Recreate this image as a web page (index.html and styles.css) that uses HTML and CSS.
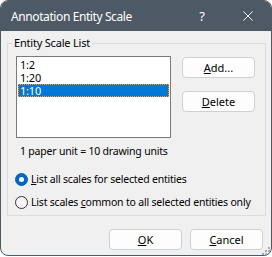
FILE: index.html
```html
<html>
  <head>
    <link rel="stylesheet" href="styles.css">
  </head>
  <body>
    <div class="window">
      <div class="titlebar">
        <span class="title">Annotation Entity Scale</span>
        <span class="caption-btn help">?</span>
        <span class="caption-btn">
          <svg width="10" height="10" viewBox="0 0 10 10"><path d="M0.5 0.5 L9.5 9.5 M9.5 0.5 L0.5 9.5" stroke="#fff" stroke-width="1" fill="none"/></svg>
        </span>
      </div>
      <div class="body">
        <fieldset class="group">
          <legend>Entity Scale List</legend>
          <div class="group-body">
            <div class="list-row">
              <div class="listbox">
                <div class="item">1:2</div>
                <div class="item">1:20</div>
                <div class="item selected">1:10</div>
              </div>
              <div class="side">
                <button class="btn"><u>A</u>dd...</button>
                <button class="btn"><u>D</u>elete</button>
              </div>
            </div>
            <div class="info">1 paper unit = 10 drawing units</div>
            <label class="radio first"><span class="dot checked"></span><span><u>L</u>ist all scales for selected entities</span></label>
            <label class="radio"><span class="dot"></span><span>List scales <u>c</u>ommon to all selected entities only</span></label>
          </div>
        </fieldset>
        <div class="footer">
          <button class="btn"><u>O</u>K</button>
          <button class="btn"><u>C</u>ancel</button>
        </div>
      </div>
      <svg class="grip" width="9" height="9" viewBox="0 0 9 9">
        <rect x="7" y="1" width="2" height="2" fill="#a8a8a8"/>
        <rect x="4" y="4" width="2" height="2" fill="#a8a8a8"/>
        <rect x="7" y="4" width="2" height="2" fill="#a8a8a8"/>
        <rect x="1" y="7" width="2" height="2" fill="#a8a8a8"/>
        <rect x="4" y="7" width="2" height="2" fill="#a8a8a8"/>
        <rect x="7" y="7" width="2" height="2" fill="#a8a8a8"/>
      </svg>
    </div>
  </body>
</html>
```

FILE: styles.css
```css
body { margin:0; background:#fff; font-family:"Noto Sans", sans-serif; font-size:10.5px; letter-spacing:-0.2px; color:#000; }
.window { position:relative; width:270px; height:254px; border:1px solid #4e5966; border-radius:8px; background:#f0f0f0; overflow:hidden; }
.titlebar { display:flex; align-items:center; height:30px; background:#4e5966; color:#fff; }
.title { flex:1; padding-left:10px; font-size:12px; letter-spacing:-0.4px; }
.caption-btn { display:flex; align-items:center; justify-content:center; width:46px; height:30px; }
.help { font-size:13px; }
.body { padding-top:4px; }
.group { margin:0 5px 0 6px; padding:5px 0; border:1px solid #dcdcdc; }
.group legend { margin-left:4px; padding:0 2px; line-height:16px; font-size:11px; }
.group-body { padding:0 8px; }
.list-row { display:flex; align-items:flex-start; gap:11px; }
.listbox { box-sizing:border-box; width:155px; height:82px; padding:1px; border:1px solid #7a7a7a; background:#fff; }
.item { height:13px; line-height:13px; padding-left:2px; overflow:hidden; font-size:11px; }
.item.selected { background:#0078d7; color:#fff; outline:1px dotted #f5a040; outline-offset:-1px; }
.side { display:flex; flex-direction:column; gap:13px; margin-top:1px; }
.btn { box-sizing:border-box; width:73px; height:21px; padding:0; border:1px solid #d0d0d0; border-radius:4px; background:#fdfdfd; font:inherit; font-size:11px; color:#000; }
.info { margin-top:5px; padding-left:4px; line-height:16px; }
.radio { display:flex; align-items:center; gap:3px; height:16px; margin-top:7px; margin-left:-1px; white-space:nowrap; }
.radio.first { margin-top:12px; }
.dot { flex:none; box-sizing:border-box; width:13px; height:13px; border:1px solid #333; border-radius:50%; background:#f7f7f7; }
.dot.checked { display:flex; align-items:center; justify-content:center; border-color:#0067c0; background:#0067c0; }
.dot.checked::after { content:""; width:5px; height:5px; border-radius:50%; background:#fff; }
.footer { display:flex; justify-content:flex-end; gap:8px; margin-top:13px; padding-right:8px; }
.grip { position:absolute; right:1px; bottom:0; }
```
